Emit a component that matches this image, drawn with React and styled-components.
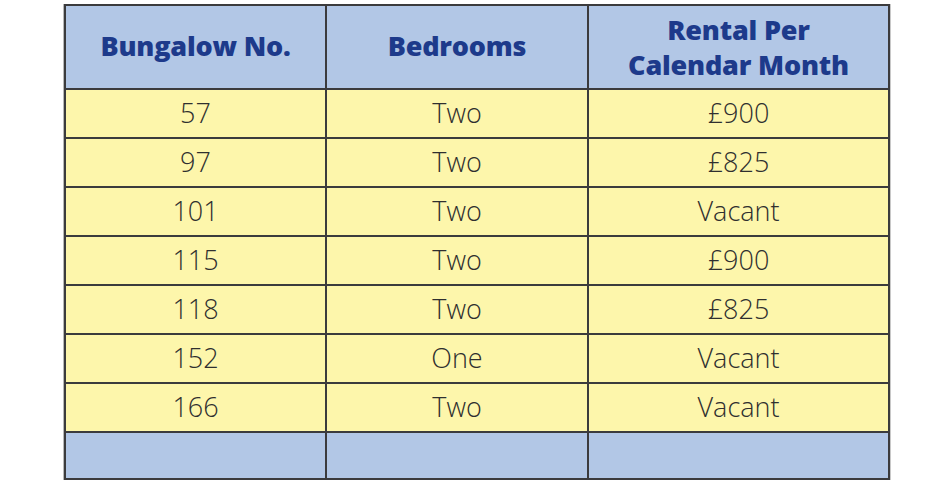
import React from "react";
import styled, { createGlobalStyle } from "styled-components";

const Global = createGlobalStyle`
  html, body { margin: 0; padding: 0; background: #ffffff; }
  body { width: 950px; height: 480px; overflow: hidden; }
`;

const Page = styled.div`
  padding: 4px 0 0 64px;
`;

const Grid = styled.div`
  display: grid;
  grid-template-columns: 259px 260px 299px;
  grid-template-rows: 82px repeat(7, 47px) 45px;
  gap: 2px;
  padding: 2px;
  width: max-content;
  background: #3b3b3d;
  box-shadow: -1px 0 0 #b8b8b8, 1px 0 0 #c8c8c8;
`;

const HeadCell = styled.div`
  background: #b2c7e6;
  color: #1d3a8b;
  font-family: "Open Sans", "Liberation Sans", sans-serif;
  font-weight: 800;
  font-size: 27px;
  line-height: 35px;
  letter-spacing: -0.2px;
  display: flex;
  align-items: center;
  justify-content: center;
  text-align: center;
  padding-bottom: ${(p) => (p.$two ? "0" : "4px")};
`;

const Cell = styled.div`
  background: ${(p) => (p.$blank ? "#b2c7e6" : "#fdf6ab")};
  color: #2f2f2f;
  font-family: "Open Sans", "Liberation Sans", sans-serif;
  font-weight: 300;
  font-size: 27px;
  display: flex;
  align-items: center;
  justify-content: center;
  padding-bottom: 3px;
`;

const rows = [
  ["57", "Two", "£900"],
  ["97", "Two", "£825"],
  ["101", "Two", "Vacant"],
  ["115", "Two", "£900"],
  ["118", "Two", "£825"],
  ["152", "One", "Vacant"],
  ["166", "Two", "Vacant"],
];

export default function App() {
  return (
    <>
      <Global />
      <Page>
        <Grid>
          <HeadCell>Bungalow No.</HeadCell>
          <HeadCell>Bedrooms</HeadCell>
          <HeadCell $two>
            Rental Per
            <br />
            Calendar Month
          </HeadCell>
          {rows.map((r, i) =>
            r.map((c, j) => <Cell key={`${i}-${j}`}>{c}</Cell>)
          )}
          <Cell $blank />
          <Cell $blank />
          <Cell $blank />
        </Grid>
      </Page>
    </>
  );
}
